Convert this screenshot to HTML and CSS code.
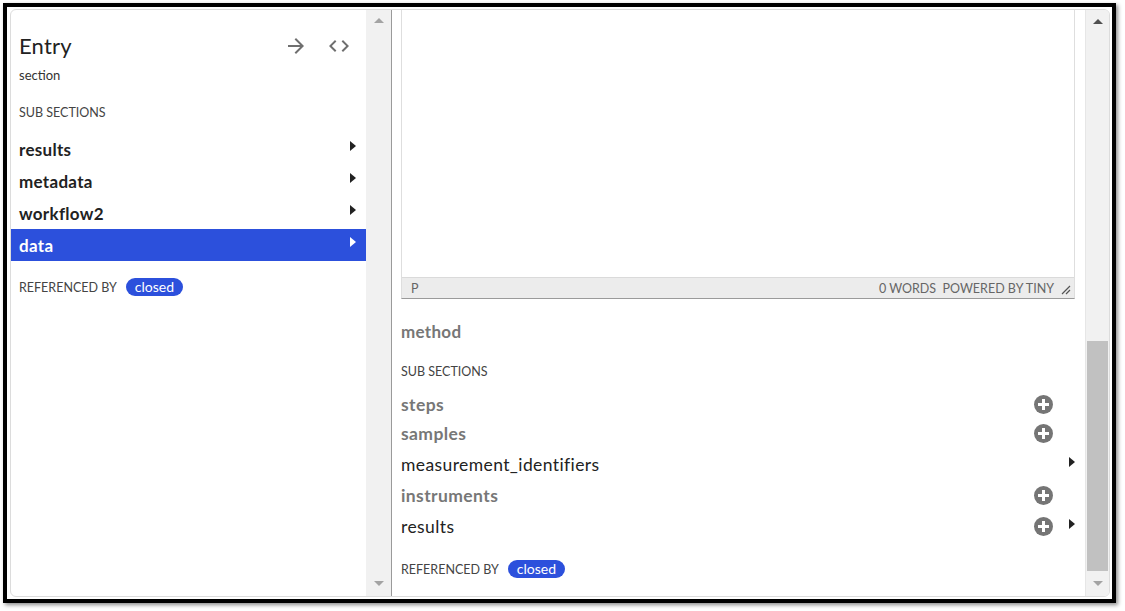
FILE: index.html
```html
<!DOCTYPE html>
<html>
<head>
<meta charset="utf-8">
<link rel="stylesheet" href="styles.css">
</head>
<body>
<div class="frame">
  <div class="card">
    <div class="pane left">
      <div class="content">
        <div class="head">
          <h1 class="title">Entry</h1>
          <div class="tools">
            <svg class="tool" width="24" height="24" viewBox="0 0 24 24"><path d="M12 4l-1.41 1.41L16.17 11H4v2h12.17l-5.58 5.59L12 20l8-8z" fill="#6f6f6f"/></svg>
            <svg class="tool" width="24" height="24" viewBox="0 0 24 24"><path d="M9.4 16.6L4.8 12l4.6-4.6L8 6l-6 6 6 6 1.4-1.4zm5.2 0l4.6-4.6-4.6-4.6L16 6l6 6-6 6-1.4-1.4z" fill="#6f6f6f"/></svg>
          </div>
        </div>
        <div class="kind">section</div>
        <div class="label sub">SUB SECTIONS</div>
        <div class="list">
          <div class="item"><span>results</span><i class="caret"></i></div>
          <div class="item"><span>metadata</span><i class="caret"></i></div>
          <div class="item"><span>workflow2</span><i class="caret"></i></div>
          <div class="item selected"><span>data</span><i class="caret"></i></div>
        </div>
        <div class="refs"><span class="label">REFERENCED BY</span><span class="chip">closed</span></div>
      </div>
      <div class="scrollbar">
        <i class="up"></i>
        <div class="track"></div>
        <i class="down"></i>
      </div>
    </div>
    <div class="pane right">
      <div class="content">
        <div class="editor">
          <div class="edit-area"></div>
          <div class="status">
            <span class="path">P</span>
            <span class="status-right">0 WORDS&nbsp;&nbsp;POWERED BY TINY</span>
            <svg class="resize" width="10" height="10" viewBox="0 0 10 10"><path d="M1 9L9 1M5 9L9 5" stroke="#555" stroke-width="1.2"/></svg>
          </div>
        </div>
        <div class="section-name">method</div>
        <div class="label sub2">SUB SECTIONS</div>
        <div class="list2">
          <div class="row empty"><span>steps</span><span class="acts"><i class="plus"></i><i class="nocaret"></i></span></div>
          <div class="row empty"><span>samples</span><span class="acts"><i class="plus"></i><i class="nocaret"></i></span></div>
          <div class="row full"><span>measurement_identifiers</span><span class="acts"><i class="caret"></i></span></div>
          <div class="row empty"><span>instruments</span><span class="acts"><i class="plus"></i><i class="nocaret"></i></span></div>
          <div class="row full"><span>results</span><span class="acts"><i class="plus"></i><i class="caret"></i></span></div>
        </div>
        <div class="refs refs2"><span class="label">REFERENCED BY</span><span class="chip">closed</span></div>
      </div>
      <div class="scrollbar sb-right">
        <i class="up dark"></i>
        <div class="track"><div class="thumb"></div></div>
        <i class="down"></i>
      </div>
    </div>
  </div>
</div>
</body>
</html>
```

FILE: styles.css
```css
* { box-sizing: border-box; }
html, body { margin: 0; padding: 0; background: #fff; }
body {
  font-family: "Lato", "Liberation Sans", sans-serif;
  color: #222;
  width: 1125px;
  height: 611px;
  overflow: hidden;
}
.frame {
  margin: 3px 0 0 3px;
  width: 1113px;
  height: 600px;
  border: 4px solid #000;
  box-shadow: 2px 2px 4px rgba(0,0,0,0.45);
  padding: 2px 2px 2px 3px;
  background: #fff;
}
.card {
  height: 588px;
  border: 1px solid #dcdcdc;
  border-radius: 6px;
  overflow: hidden;
  display: flex;
}
.pane { display: flex; height: 100%; }
.left { width: 381px; border-right: 1px solid #9a9a9a; }
.right { flex: 1; }
.content { flex: 1; overflow: hidden; }

.scrollbar {
  width: 25px;
  background: #f1f1f1;
  display: flex;
  flex-direction: column;
  align-items: center;
  padding: 8px 0 10px;
}
.sb-right { width: 24px; border-left: 1px solid #e6e6e6; padding: 9px 0 10px; }
.scrollbar .track { flex: 1; width: 100%; display: flex; flex-direction: column; justify-content: flex-end; padding: 0 1px; }
.thumb { height: 230px; background: #c1c1c1; margin-bottom: 4px; }
.up, .down { width: 0; height: 0; border-left: 5px solid transparent; border-right: 5px solid transparent; }
.up { border-bottom: 5px solid #a3a3a3; margin-bottom: 4px; }
.up.dark { border-bottom-color: #505050; }
.down { border-top: 5px solid #a3a3a3; margin-top: 6px; }

/* left pane */
.head { display: flex; align-items: center; justify-content: space-between; padding: 23px 15px 0 8px; height: 49px; }
.title { margin: 0; font-size: 22px; font-weight: 400; color: #222; line-height: 26px; letter-spacing: 0.2px; }
.tools { display: flex; gap: 19px; align-items: center; }
.kind { padding-left: 8px; font-size: 13px; color: #333; margin-top: 7px; line-height: 18px; }
.label { font-size: 12.5px; color: #444; text-transform: uppercase; font-weight: 400; }
.sub { display: block; padding-left: 8px; margin-top: 20px; line-height: 18px; }
.list { margin-top: 11px; }
.item {
  height: 32px;
  display: flex;
  align-items: center;
  justify-content: space-between;
  padding: 0 10px 0 8px;
  font-size: 17px;
  font-weight: 700;
  letter-spacing: 0.3px;
  color: #222;
}
.item.selected { background: #2c50dc; color: #fff; }
.caret {
  width: 0; height: 0;
  border-top: 5px solid transparent;
  border-bottom: 5px solid transparent;
  border-left: 6px solid #222;
  margin-top: -6px;
}
.selected .caret { border-left-color: #fff; }
.refs { display: flex; align-items: center; gap: 9px; padding-left: 8px; margin-top: 17px; }
.chip {
  background: #2c50dc;
  color: #fff;
  border-radius: 10px;
  font-size: 14px;
  height: 18px;
  line-height: 18px;
  padding: 0 9px;
}

/* right pane */
.right .content { padding: 0 10px 0 9px; }
.editor { border: 1px solid #dedede; border-top: none; border-bottom: 1px solid #9a9a9a; }
.edit-area { height: 267px; background: #fff; }
.status {
  height: 21px;
  background: #ececec;
  border-top: 1px solid #dadada;
  display: flex;
  align-items: center;
  padding: 0 3px 0 9px;
  font-size: 12.5px;
  color: #666;
}
.status-right { margin-left: auto; margin-right: 7px; }
.resize { margin-top: 4px; }
.section-name { font-size: 17px; font-weight: 700; color: #777; margin-top: 22px; line-height: 22px; letter-spacing: 0.3px; }
.sub2 { display: block; margin-top: 20px; line-height: 18px; }
.list2 { margin-top: 9px; }
.row {
  display: flex;
  align-items: center;
  justify-content: space-between;
  font-size: 17.5px;
  letter-spacing: 0.4px;
}
.row.empty { height: 29px; color: #777; font-weight: 700; }
.row.full { height: 33px; color: #222; font-weight: 400; }
.acts { display: flex; align-items: center; gap: 16px; }
.plus {
  width: 19px; height: 19px; border-radius: 50%;
  background: #757575;
  position: relative;
}
.plus::before, .plus::after {
  content: ""; position: absolute; background: #fff; left: 50%; top: 50%;
}
.plus::before { width: 11px; height: 3px; margin: -1.5px 0 0 -5.5px; }
.plus::after { width: 3px; height: 11px; margin: -5.5px 0 0 -1.5px; }
.nocaret { width: 6px; }
.refs2 { padding-left: 0; margin-top: 17px; }
```
